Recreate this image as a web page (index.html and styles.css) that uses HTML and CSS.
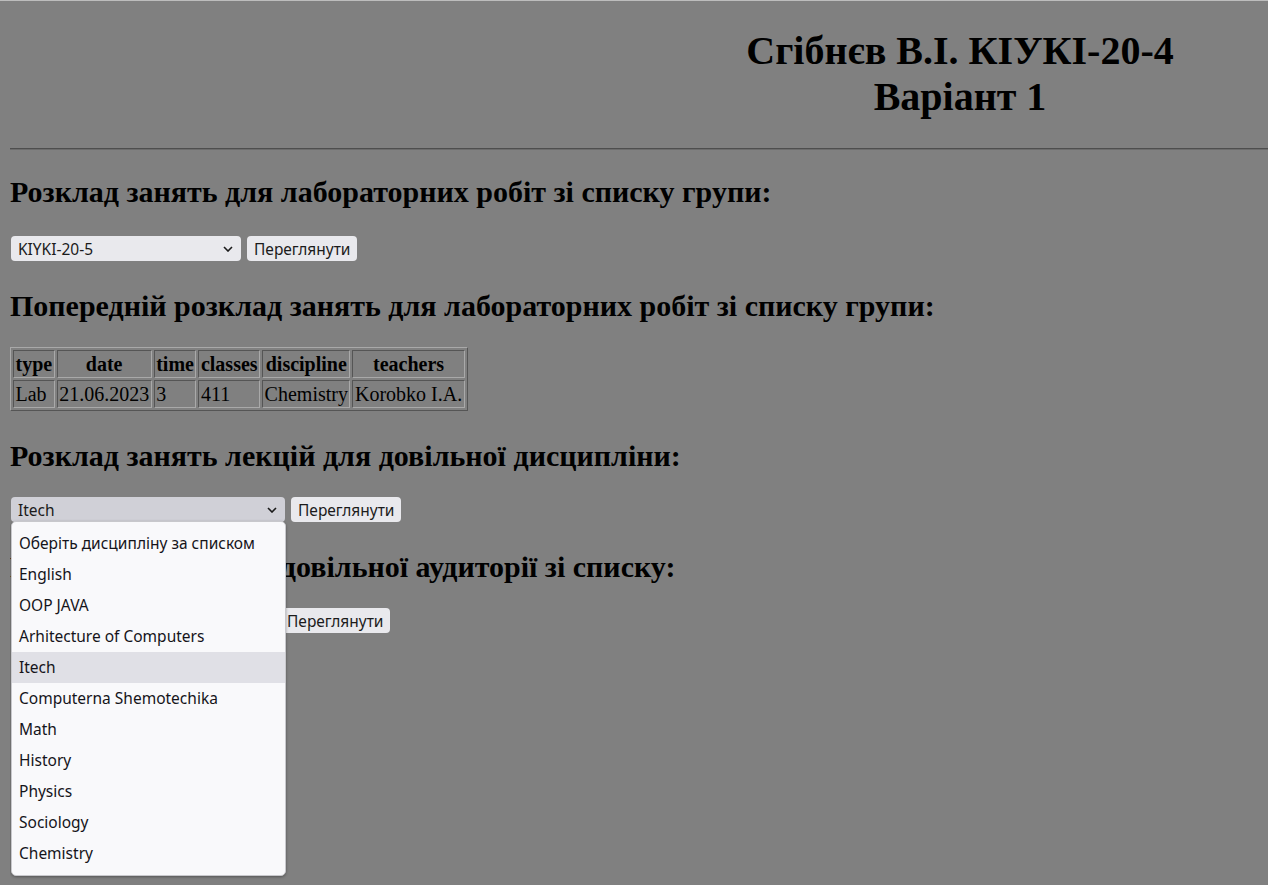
FILE: index.html
```html
<!DOCTYPE html>
<html lang="uk">
<head>
<meta charset="utf-8">
<title>Розклад</title>
<link rel="stylesheet" href="styles.css">
</head>
<body>
<h1 class="title">Сгібнєв В.І. КІУКІ-20-4<br>Варіант 1</h1>
<hr class="rule">

<h2 class="section first">Розклад занять для лабораторних робіт зі списку групи:</h2>
<div class="form-row">
  <div class="select select-group">
    <span class="select-value">KIYKI-20-5</span>
    <svg class="chev" width="10" height="6" viewBox="0 0 10 6"><path d="M1 1 L5 5 L9 1" fill="none" stroke="#1b1b1b" stroke-width="1.6"/></svg>
  </div>
  <button class="btn">Переглянути</button>
</div>

<h2 class="section">Попередній розклад занять для лабораторних робіт зі списку групи:</h2>
<table class="sched">
  <tr><th>type</th><th>date</th><th>time</th><th>classes</th><th>discipline</th><th>teachers</th></tr>
  <tr><td>Lab</td><td>21.06.2023</td><td>3</td><td>411</td><td>Chemistry</td><td>Korobko I.A.</td></tr>
</table>

<h2 class="section">Розклад занять лекцій для довільної дисципліни:</h2>
<div class="form-row anchor">
  <div class="select select-disc open">
    <span class="select-value">Itech</span>
    <svg class="chev" width="10" height="6" viewBox="0 0 10 6"><path d="M1 1 L5 5 L9 1" fill="none" stroke="#1b1b1b" stroke-width="1.6"/></svg>
  </div>
  <button class="btn">Переглянути</button>
  <ul class="dropdown">
    <li>Оберіть дисципліну за списком</li>
    <li>English</li>
    <li>OOP JAVA</li>
    <li>Arhitecture of Computers</li>
    <li class="active">Itech</li>
    <li>Computerna Shemotechika</li>
    <li>Math</li>
    <li>History</li>
    <li>Physics</li>
    <li>Sociology</li>
    <li>Chemistry</li>
  </ul>
</div>

<h2 class="section">Розклад занять для довільної аудиторії зі списку:</h2>
<div class="form-row">
  <div class="select select-room">
    <span class="select-value">411</span>
    <svg class="chev" width="10" height="6" viewBox="0 0 10 6"><path d="M1 1 L5 5 L9 1" fill="none" stroke="#1b1b1b" stroke-width="1.6"/></svg>
  </div>
  <button class="btn">Переглянути</button>
</div>
</body>
</html>
```
FILE: styles.css
```css
html {
  background: #808080;
  border-top: 1px solid #bdbdbd;
}
body {
  margin: 0 0 0 10px;
  min-height: 884px;
  background: #808080;
  color: #000;
  font-family: "Liberation Serif", "Times New Roman", serif;
  font-size: 20px;
}
.title {
  margin: 27px 0 0;
  padding-left: 642px;
  text-align: center;
  font-size: 40px;
  line-height: 46px;
  font-weight: bold;
}
.rule {
  margin: 28px 0 0;
  height: 0;
  border: 0;
  border-top: 1px solid #4e4e4e;
  border-bottom: 1px solid #6c6c6c;
}
.section {
  margin: 28px 0 0;
  font-size: 30px;
  line-height: 34px;
  font-weight: bold;
}
.section.first {
  margin-top: 25px;
}
.form-row {
  display: flex;
  align-items: center;
  gap: 6px;
  margin: 24px 0 0 1px;
}
.section.first + .form-row {
  margin-top: 27px;
}
.anchor {
  position: relative;
}
.select {
  box-sizing: border-box;
  height: 25px;
  display: flex;
  align-items: center;
  justify-content: space-between;
  padding: 0 8px 0 7px;
  background: #e9e9ed;
  border-radius: 4px;
  font-family: "Noto Sans", "Open Sans", sans-serif;
  font-size: 15.5px;
  color: #1b1b1b;
}
.select.open {
  background: #d0d0d7;
}
.select-group { width: 230px; }
.select-disc { width: 274px; }
.select-room { width: 263px; }
.chev { flex: none; }
.btn {
  box-sizing: border-box;
  height: 25px;
  padding: 0 7px;
  border: 0;
  border-radius: 4px;
  background: #e9e9ed;
  font-family: "Noto Sans", "Open Sans", sans-serif;
  font-size: 15.5px;
  color: #1b1b1b;
}
.sched {
  margin: 24px 0 0;
  border-collapse: separate;
  border-spacing: 2px;
  border: 1px solid;
  border-color: #a9a9a9 #555 #555 #a9a9a9;
  font-size: 20px;
  line-height: 23px;
}
.sched th,
.sched td {
  padding: 2px 1.5px 1px;
  border: 1px solid;
  border-color: #555 #a9a9a9 #a9a9a9 #555;
}
.sched td { text-align: left; }
.dropdown {
  position: absolute;
  left: 0;
  top: 24px;
  width: 275px;
  box-sizing: border-box;
  margin: 0;
  padding: 6px 0 6px;
  list-style: none;
  background: #f9f9fb;
  border: 1px solid #c8c8cc;
  border-radius: 5px;
  box-shadow: 0 1px 3px rgba(0,0,0,0.35);
  font-family: "Noto Sans", "Open Sans", sans-serif;
  font-size: 15.5px;
  color: #15141a;
  z-index: 5;
}
.dropdown li {
  height: 31px;
  line-height: 31px;
  padding-left: 7px;
}
.dropdown li.active {
  background: #e0e0e6;
}
```
